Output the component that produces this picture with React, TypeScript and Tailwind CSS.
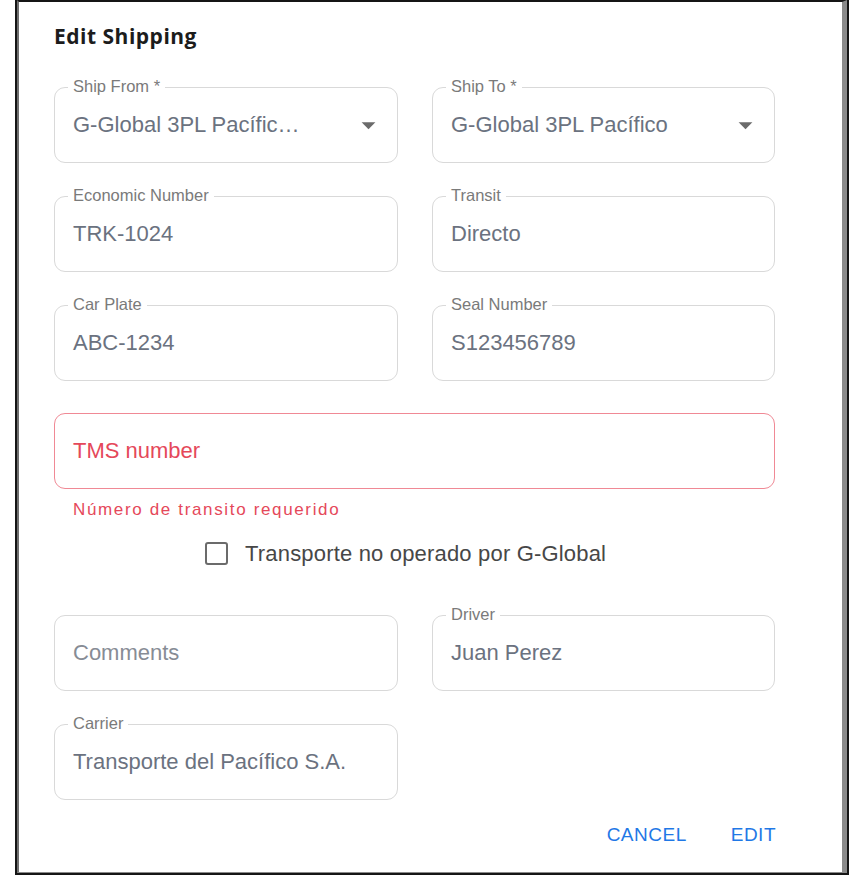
import React from 'react'

type FieldProps = {
  label?: string
  value?: string
  placeholder?: string
  select?: boolean
  error?: boolean
}

function ArrowDown() {
  return (
    <svg
      className="absolute right-[12px] top-1/2 -translate-y-1/2 w-[33px] h-[33px] text-[#6b6b6b]"
      viewBox="0 0 24 24"
      fill="currentColor"
    >
      <path d="M7 10l5 5 5-5z" />
    </svg>
  )
}

function Field({ label, value, placeholder, select, error }: FieldProps) {
  return (
    <div
      className={`relative h-[76px] rounded-[11px] border flex items-center pl-[18px] ${
        error ? 'border-[#f08995]' : 'border-[#d9d9d9]'
      }`}
    >
      {label && (
        <span className="absolute -top-[12px] left-[13px] px-[5px] bg-white text-[16.5px] leading-[20px] text-[#7a7a7a]">
          {label}
        </span>
      )}
      {value ? (
        <span className="text-[22px] leading-[28px] text-[#6b7280] whitespace-nowrap">{value}</span>
      ) : (
        <span className={`text-[22px] leading-[28px] ${error ? 'text-[#e5485a]' : 'text-[#878c95]'}`}>
          {placeholder}
        </span>
      )}
      {select && <ArrowDown />}
    </div>
  )
}

export default function App() {
  return (
    <div className="w-[864px] h-[886px] bg-white overflow-hidden font-['Liberation_Sans',Arial,sans-serif]">
      {/* dialog frame */}
      <div className="ml-[15px] w-[834px] h-[875px] border-l-2 border-r-2 border-b-2 border-[#151515]">
        <div className="h-full border-t-2 border-t-[#151515] border-l-2 border-l-[#6e6e6e] border-r-[5px] border-r-[#8a8a8a] border-b border-b-[#8a8a8a] bg-white pl-[35px] pt-[20px]">
          <h2 className="font-['Open_Sans',sans-serif] font-bold text-[21px] leading-[28px] text-[#1c1c1c] tracking-[0.5px]">
            Edit Shipping
          </h2>

          <div className="mt-[37px] w-[721px] grid grid-cols-[344px_343px] gap-x-[34px] gap-y-[33px]">
            <Field label="Ship From *" value="G-Global 3PL Pacífic…" select />
            <Field label="Ship To *" value="G-Global 3PL Pacífico" select />
            <Field label="Economic Number" value="TRK-1024" />
            <Field label="Transit" value="Directo" />
            <Field label="Car Plate" value="ABC-1234" />
            <Field label="Seal Number" value="S123456789" />
          </div>

          <div className="mt-[32px] w-[721px]">
            <Field placeholder="TMS number" error />
            <p className="mt-[11px] pl-[19px] text-[17px] leading-[20px] tracking-[1.65px] text-[#e5485a]">
              Número de transito requerido
            </p>
          </div>

          <label className="mt-[22px] ml-[151px] flex items-center gap-[17px] h-[23px]">
            <span className="w-[23px] h-[23px] rounded-[3px] border-2 border-[#6b6b6b] bg-white" />
            <span className="text-[22px] leading-[26px] tracking-[0.18px] text-[#474747]">
              Transporte no operado por G-Global
            </span>
          </label>

          <div className="mt-[50px] w-[721px] grid grid-cols-[344px_343px] gap-x-[34px] gap-y-[33px]">
            <Field placeholder="Comments" />
            <Field label="Driver" value="Juan Perez" />
            <Field label="Carrier" value="Transporte del Pacífico S.A." />
          </div>

          <div className="mt-[24px] w-[722px] flex justify-end gap-[44px]">
            <button className="text-[19px] leading-[22px] tracking-[0.5px] text-[#1f78e6]">CANCEL</button>
            <button className="text-[19px] leading-[22px] tracking-[0.5px] text-[#1f78e6]">EDIT</button>
          </div>
        </div>
      </div>
    </div>
  )
}
